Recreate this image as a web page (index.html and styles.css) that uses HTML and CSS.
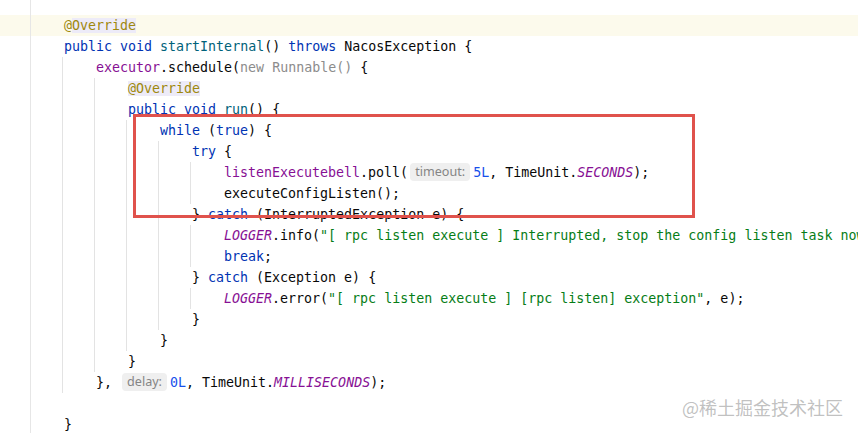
FILE: index.html
```html
<!DOCTYPE html>
<html>
<head>
<meta charset="utf-8">
<link rel="stylesheet" href="styles.css">
</head>
<body>
<div class="editor">
  <div class="ln top"><span class="g"></span></div>
  <div class="ln cur"><span class="g"></span><span class="t"><span class="an">@<span class="hl">Override</span></span></span></div>
  <div class="ln"><span class="g"></span><span class="t"><span class="kw">public void</span> <span class="md">startInternal</span>() <span class="kw">throws</span> NacosException {</span></div>
  <div class="ln"><span class="g"></span><span class="i"></span><span class="t"><span class="fd">executor</span>.schedule(<span class="gr">new Runnable()</span> {</span></div>
  <div class="ln"><span class="g"></span><span class="i"></span><span class="i"></span><span class="t"><span class="an hl">@Override</span></span></div>
  <div class="ln"><span class="g"></span><span class="i"></span><span class="i"></span><span class="t"><span class="kw">public void</span> <span class="md">run</span>() {</span></div>
  <div class="ln"><span class="g"></span><span class="i"></span><span class="i"></span><span class="i"></span><span class="t"><span class="kw">while</span> (<span class="kw">true</span>) {</span></div>
  <div class="ln"><span class="g"></span><span class="i"></span><span class="i"></span><span class="i"></span><span class="i"></span><span class="t"><span class="kw">try</span> {</span></div>
  <div class="ln"><span class="g"></span><span class="i"></span><span class="i"></span><span class="i"></span><span class="i"></span><span class="i"></span><span class="t"><span class="fd">listenExecutebell</span>.poll(<span class="hint">timeout:</span><span class="nm">5L</span>, TimeUnit.<span class="st">SECONDS</span>);</span></div>
  <div class="ln"><span class="g"></span><span class="i"></span><span class="i"></span><span class="i"></span><span class="i"></span><span class="i"></span><span class="t">executeConfigListen();</span></div>
  <div class="ln"><span class="g"></span><span class="i"></span><span class="i"></span><span class="i"></span><span class="i"></span><span class="t">} <span class="kw">catch</span> (InterruptedException e) {</span></div>
  <div class="ln"><span class="g"></span><span class="i"></span><span class="i"></span><span class="i"></span><span class="i"></span><span class="i"></span><span class="t"><span class="st">LOGGER</span>.info(<span class="sg">"[ rpc listen execute ] Interrupted, stop the config listen task now.");</span></span></div>
  <div class="ln"><span class="g"></span><span class="i"></span><span class="i"></span><span class="i"></span><span class="i"></span><span class="i"></span><span class="t"><span class="kw">break</span>;</span></div>
  <div class="ln"><span class="g"></span><span class="i"></span><span class="i"></span><span class="i"></span><span class="i"></span><span class="t">} <span class="kw">catch</span> (Exception e) {</span></div>
  <div class="ln"><span class="g"></span><span class="i"></span><span class="i"></span><span class="i"></span><span class="i"></span><span class="i"></span><span class="t"><span class="st">LOGGER</span>.error(<span class="sg">"[ rpc listen execute ] [rpc listen] exception"</span>, e);</span></div>
  <div class="ln"><span class="g"></span><span class="i"></span><span class="i"></span><span class="i"></span><span class="i"></span><span class="t">}</span></div>
  <div class="ln"><span class="g"></span><span class="i"></span><span class="i"></span><span class="i"></span><span class="t">}</span></div>
  <div class="ln"><span class="g"></span><span class="i"></span><span class="i"></span><span class="t">}</span></div>
  <div class="ln"><span class="g"></span><span class="i"></span><span class="t">}, <span class="hint">delay:</span><span class="nm">0L</span>, TimeUnit.<span class="st">MILLISECONDS</span>);</span></div>
  <div class="ln"><span class="g"></span></div>
  <div class="ln"><span class="g"></span><span class="t">}</span></div>
  <div class="mark"></div>
  <div class="wm">@稀土掘金技术社区</div>
</div>
</body>
</html>
```
FILE: styles.css
```css
html, body {
  margin: 0;
  padding: 0;
  background: #ffffff;
}
.editor {
  position: relative;
  width: 858px;
  height: 433px;
  overflow: hidden;
  font-family: "DejaVu Sans Mono", "Liberation Mono", monospace;
  font-size: 13.3px;
  color: #080808;
}
.ln {
  display: flex;
  height: 21px;
  line-height: 21px;
  white-space: pre;
}
.ln.top {
  height: 15px;
}
.ln.cur {
  background: #fcfaec;
}
.g {
  flex: none;
  width: 31px;
  height: 100%;
  border-right: 1px solid #e6e6e6;
  box-sizing: border-box;
  margin-right: 31px;
}
.i {
  flex: none;
  width: 32px;
  height: 100%;
  border-left: 1px solid #e3e3e3;
  box-sizing: border-box;
}
.t {
  padding-left: 2px;
}
.kw { color: #0033b3; }
.md { color: #00627a; }
.fd { color: #871094; }
.st { color: #871094; font-style: italic; }
.sg { color: #067d17; }
.nm { color: #1750eb; }
.an { color: #9e880d; }
.gr { color: #8c8c8c; }
.hl { background: #edebf8; }
.hint {
  display: inline-block;
  font-family: "Noto Sans", "Open Sans", sans-serif;
  font-size: 12.6px;
  color: #858585;
  background: #efefef;
  border-radius: 4px;
  line-height: 18px;
  padding: 0 5px;
  margin: 0 3px 0 2px;
  vertical-align: 1px;
}
.mark {
  position: absolute;
  left: 133px;
  top: 114px;
  width: 562px;
  height: 104px;
  border: 3px solid #e0524c;
  box-sizing: border-box;
}
.wm {
  position: absolute;
  left: 682px;
  top: 395px;
  font-family: "Noto Sans CJK SC", sans-serif;
  font-size: 18px;
  line-height: 24px;
  color: rgba(140, 140, 140, 0.55);
}
```
